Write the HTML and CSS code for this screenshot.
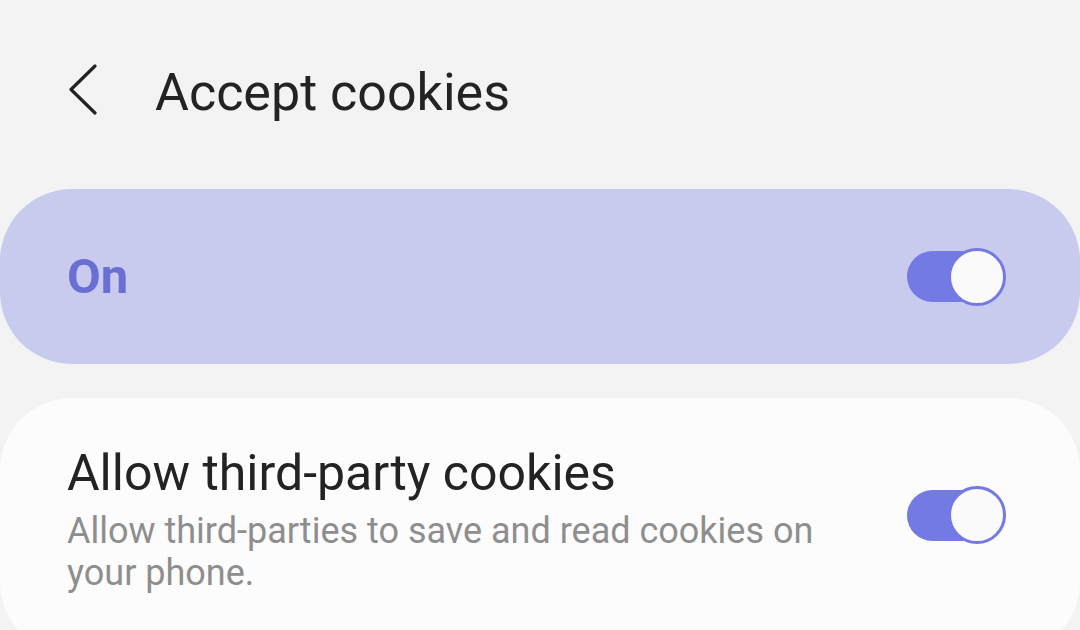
FILE: index.html
```html
<!DOCTYPE html>
<html lang="en">
<head>
<meta charset="utf-8">
<title>Accept cookies</title>
<link rel="stylesheet" href="styles.css">
</head>
<body>
<div class="screen">
  <header class="appbar">
    <svg class="back" width="30" height="52" viewBox="0 0 30 52" aria-hidden="true">
      <polyline points="26,2 2,25.5 26,49" fill="none" stroke="#222" stroke-width="3.2" stroke-linecap="round" stroke-linejoin="round"/>
    </svg>
    <h1 class="title">Accept cookies</h1>
  </header>

  <section class="card card-master">
    <span class="master-label">On</span>
    <span class="switch"><span class="track"></span><span class="knob"></span></span>
  </section>

  <section class="card card-item">
    <div class="item-text">
      <div class="item-title">Allow third-party cookies</div>
      <div class="item-desc">Allow third-parties to save and read cookies on your phone.</div>
    </div>
    <span class="switch"><span class="track"></span><span class="knob"></span></span>
  </section>
</div>
</body>
</html>
```

FILE: styles.css
```css
html, body {
  margin: 0;
  padding: 0;
  background: #f3f3f3;
  height: 100%;
  overflow: hidden;
}

.screen {
  font-family: Roboto, "Noto Sans", sans-serif;
  color: #232323;
  display: flex;
  flex-direction: column;
}

.appbar {
  height: 179px;
  display: flex;
  align-items: center;
  padding-left: 69px;
}

.back {
  display: block;
  flex: none;
}

.title {
  margin: 6px 0 0 56px;
  font-size: 52px;
  font-weight: 400;
  line-height: 1;
  color: #232323;
}

.card {
  display: flex;
  align-items: center;
  justify-content: space-between;
  padding: 0 74px 0 67px;
  border-radius: 72px;
}

.card-master {
  margin-top: 10px;
  height: 175px;
  box-sizing: border-box;
  background: #c8caee;
}

.master-label {
  font-size: 49px;
  font-weight: 700;
  color: #6a6fd2;
  line-height: 1;
}

.card-item {
  margin-top: 34px;
  background: #fcfcfc;
  padding-top: 46px;
  padding-bottom: 60px;
  align-items: flex-start;
}

.item-text {
  width: 810px;
}

.item-title {
  font-size: 50px;
  line-height: 58px;
  color: #232323;
}

.item-desc {
  margin-top: 8px;
  font-size: 36px;
  line-height: 42px;
  color: #8e8e8e;
}

.card-item .switch {
  margin-top: 42px;
}

.switch {
  position: relative;
  flex: none;
  width: 99px;
  height: 58px;
}

.track {
  position: absolute;
  left: 0;
  top: 3.5px;
  width: 80px;
  height: 51px;
  border-radius: 26px;
  background: #737ae4;
}

.knob {
  position: absolute;
  right: 0;
  top: 0;
  width: 58px;
  height: 58px;
  box-sizing: border-box;
  border: 3px solid #7479e3;
  border-radius: 50%;
  background: #fafafa;
}
```
